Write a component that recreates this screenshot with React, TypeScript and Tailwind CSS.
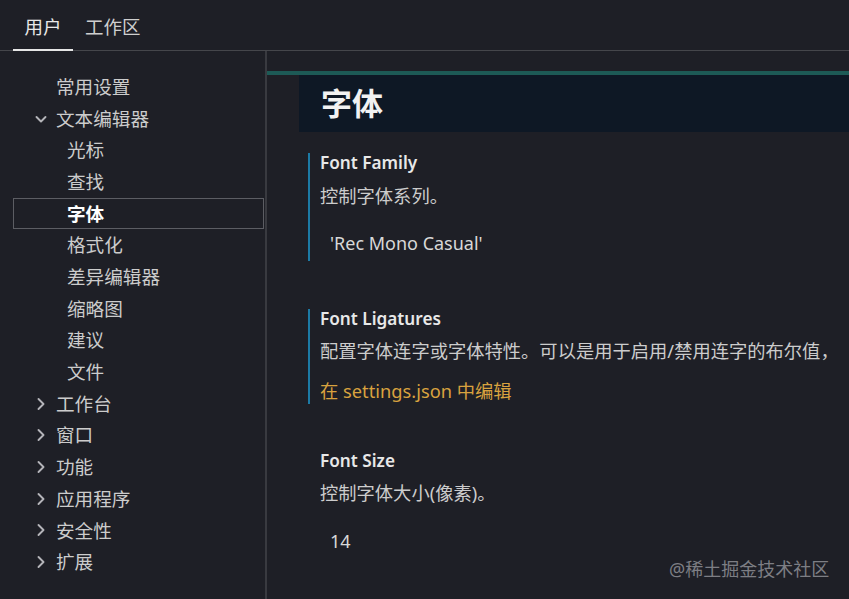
import React from "react";

const font = { fontFamily: '"Noto Sans", "Noto Sans CJK SC", sans-serif' };

function ChevronDown() {
  return (
    <svg width="16" height="16" viewBox="0 0 16 16" fill="none" stroke="#b4b4b9" strokeWidth="1.9" strokeLinecap="round" strokeLinejoin="round">
      <path d="M3.5 6 L8 10.5 L12.5 6" />
    </svg>
  );
}
function ChevronRight() {
  return (
    <svg width="16" height="16" viewBox="0 0 16 16" fill="none" stroke="#b4b4b9" strokeWidth="1.9" strokeLinecap="round" strokeLinejoin="round">
      <path d="M5.5 3 L10.5 8 L5.5 13" />
    </svg>
  );
}

type Item = { label: string; level: 0 | 1; chevron?: "down" | "right"; selected?: boolean };

const items: Item[] = [
  { label: "常用设置", level: 0 },
  { label: "文本编辑器", level: 0, chevron: "down" },
  { label: "光标", level: 1 },
  { label: "查找", level: 1 },
  { label: "字体", level: 1, selected: true },
  { label: "格式化", level: 1 },
  { label: "差异编辑器", level: 1 },
  { label: "缩略图", level: 1 },
  { label: "建议", level: 1 },
  { label: "文件", level: 1 },
  { label: "工作台", level: 0, chevron: "right" },
  { label: "窗口", level: 0, chevron: "right" },
  { label: "功能", level: 0, chevron: "right" },
  { label: "应用程序", level: 0, chevron: "right" },
  { label: "安全性", level: 0, chevron: "right" },
  { label: "扩展", level: 0, chevron: "right" },
];

export default function App() {
  return (
    <div className="relative w-[849px] h-[599px] overflow-hidden bg-[#1e1f26] text-[#cccccc]" style={font}>
      {/* Tabs */}
      <div className="h-[51px] flex items-stretch border-b border-[#45464b] pl-[13px]">
        <div className="relative w-[60px] flex items-center justify-center pt-[4px] text-[18.5px] text-[#e8e8e8]">
          用户
          <div className="absolute left-0 right-0 bottom-[-1px] h-[2px] bg-[#e6e6e6]" />
        </div>
        <div className="flex items-center pl-[12px] pt-[4px] text-[18.5px] text-[#cfcfcf]">工作区</div>
      </div>
      <div className="flex h-[548px]">
        {/* Sidebar */}
        <div className="w-[267px] shrink-0 pt-[20px] pl-[13px] pr-[1px] border-r-2 border-[#393a40] flex flex-col">
          {items.map((it) => (
            <div
              key={it.label}
              className={
                "h-[31.7px] flex items-center text-[18.6px] " +
                (it.selected ? "border border-[#5c5d63] text-white font-bold" : "border border-transparent")
              }
            >
              <div className="w-[42px] pl-[19px] flex items-center shrink-0">
                {it.chevron === "down" ? <ChevronDown /> : it.chevron === "right" ? <ChevronRight /> : null}
              </div>
              <span className={it.level === 1 ? "pl-[11px]" : ""}>{it.label}</span>
            </div>
          ))}
        </div>
        {/* Main */}
        <div className="flex-1 pt-[20px]">
          <div className="h-[4px] bg-[#1d5a56]" />
          <div className="ml-[32px] h-[57px] bg-[#0e1825] flex items-center pl-[22px]">
            <span className="text-[31px] font-bold text-[#f2f2f2]">字体</span>
          </div>
          <div className="ml-[41px]">
            {/* Font Family */}
            <div className="mt-[21px] border-l-2 border-[#1c7aa5] pl-[10px] pb-[8px]">
              <div className="leading-[20px] text-[17.2px] font-semibold text-[#e8e8e8]">Font Family</div>
              <div className="mt-[13px] leading-[20px] text-[18.3px]">控制字体系列。</div>
              <div className="mt-[27px] leading-[20px] text-[18px] pl-[10px] text-[#d8d8d8]">'Rec Mono Casual'</div>
            </div>
            {/* Font Ligatures */}
            <div className="mt-[48px] border-l-2 border-[#1c7aa5] pl-[10px] pb-[3px]">
              <div className="leading-[20px] text-[17.2px] font-semibold text-[#e8e8e8]">Font Ligatures</div>
              <div className="mt-[12px] leading-[20px] text-[18.3px] whitespace-nowrap">配置字体连字或字体特性。可以是用于启用/禁用连字的布尔值，</div>
              <div className="mt-[20px] leading-[20px] text-[18.3px] text-[#d9a23f]">在 settings.json 中编辑</div>
            </div>
            {/* Font Size */}
            <div className="mt-[47px] pl-[12px]">
              <div className="leading-[20px] text-[17.2px] font-semibold text-[#e8e8e8]">Font Size</div>
              <div className="mt-[12px] leading-[20px] text-[18.3px]">控制字体大小(像素)。</div>
              <div className="mt-[28px] leading-[20px] text-[18px] pl-[10px] text-[#d8d8d8]">14</div>
            </div>
          </div>
        </div>
      </div>
      <div className="absolute left-[669px] top-[556px] text-[18px] text-[#7d7e84]">@稀土掘金技术社区</div>
    </div>
  );
}
